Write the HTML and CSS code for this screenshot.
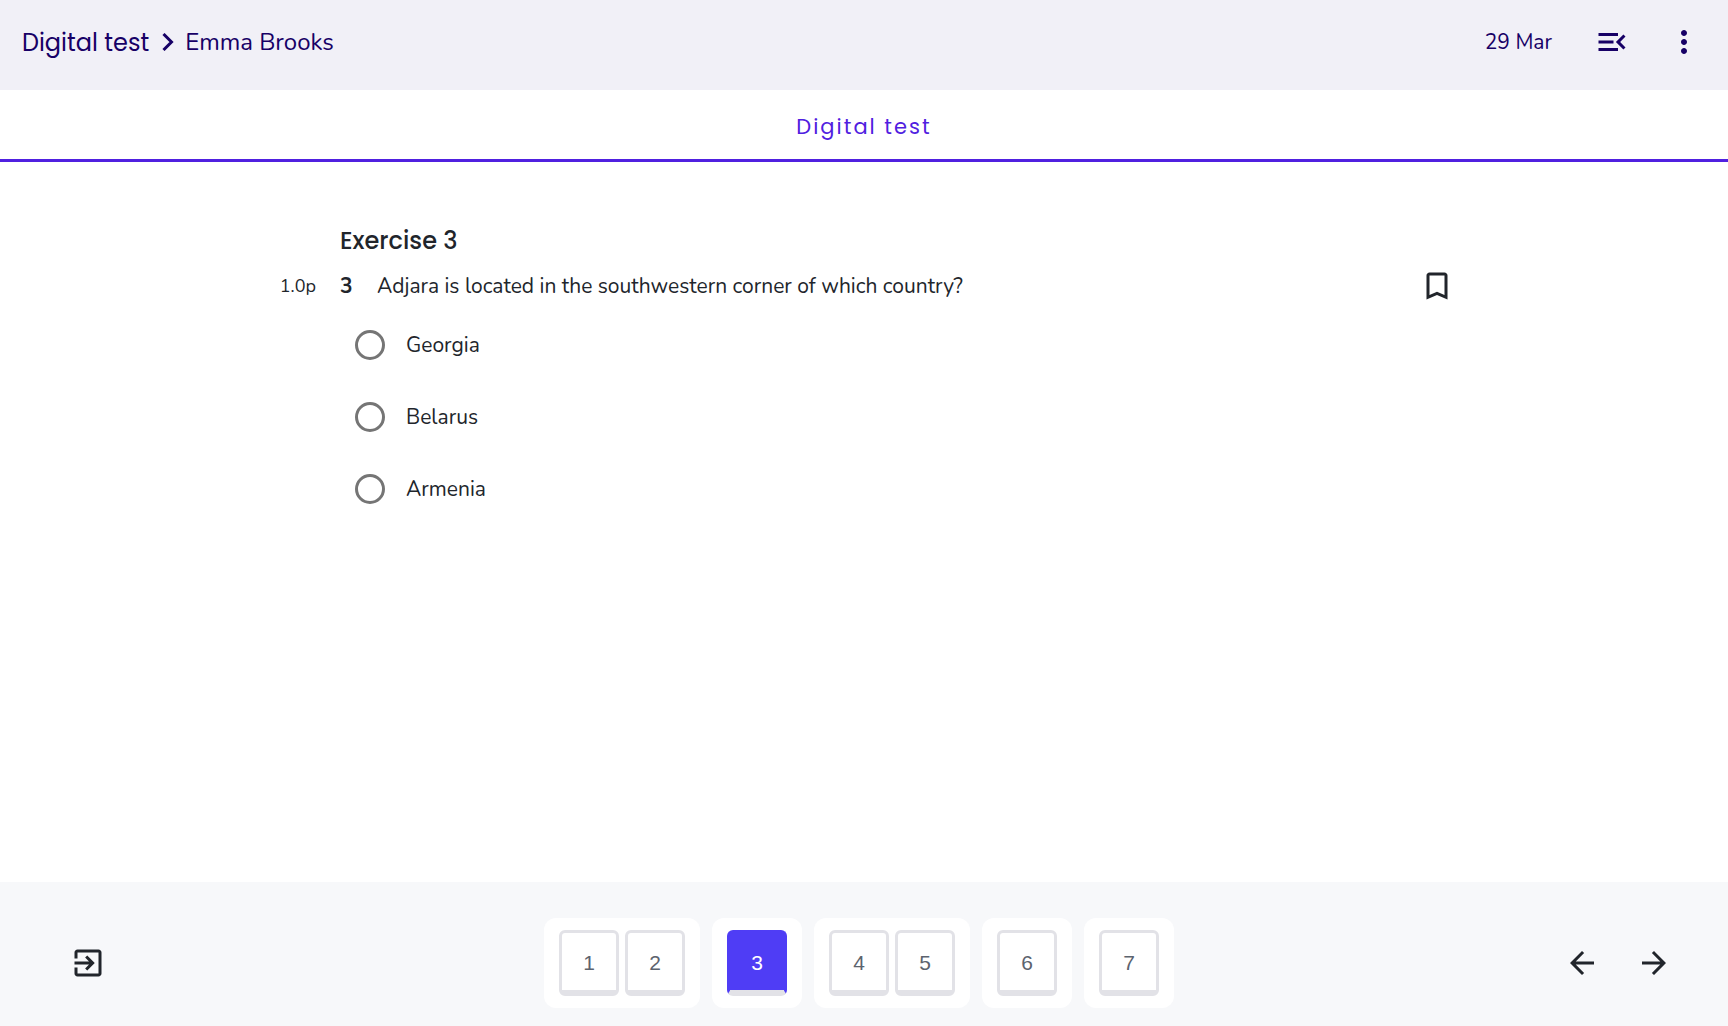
FILE: index.html
```html
<!DOCTYPE html>
<html lang="en">
<head>
  <meta charset="UTF-8">
  <meta name="viewport" content="width=device-width, initial-scale=1.0">
  <title>Digital test</title>
  <link rel="stylesheet" href="styles.css">
</head>
<body>
  <header class="topbar">
    <nav class="breadcrumb" aria-label="Breadcrumb">
      <a href="#" class="crumb-title">Digital test</a>
      <svg class="chevron" viewBox="0 0 12 18" aria-hidden="true"><path d="M1.500 1L9.500 9l-8 8"/></svg>
      <span class="crumb-name">Emma Brooks</span>
    </nav>
    <div class="topbar-right">
      <span class="date">29 Mar</span>
      <button type="button" class="icon-btn" aria-label="Open panel">
        <svg class="icon" viewBox="0 0 24 24"><path d="M3 18h13v-2H3v2zm0-5h10v-2H3v2zm0-7v2h13V6H3zm18 9.590L17.420 12 21 8.410 19.590 7l-5 5 5 5L21 15.590z"/></svg>
      </button>
      <button type="button" class="icon-btn" aria-label="More options">
        <svg class="icon" viewBox="0 0 24 24"><path d="M12 8c1.100 0 2-.9 2-2s-.9-2-2-2-2 .9-2 2 .9 2 2 2zm0 2c-1.100 0-2 .9-2 2s.9 2 2 2 2-.9 2-2-.9-2-2-2zm0 6c-1.100 0-2 .9-2 2s.9 2 2 2 2-.9 2-2-.9-2-2-2z"/></svg>
      </button>
    </div>
  </header>

  <nav class="tabs">
    <a href="#" class="tab">Digital test</a>
  </nav>

  <main class="content">
    <form class="exercise">
      <h1>Exercise 3</h1>
      <div class="question-row">
        <span class="points">1.0p</span>
        <span class="number">3</span>
        <p class="question" id="question-text">Adjara is located in the southwestern corner of which country?</p>
        <button type="button" class="bookmark" aria-label="Bookmark question">
          <svg class="icon" viewBox="0 0 24 24"><path d="M17 3H7c-1.100 0-2 .9-2 2v16l7-3 7 3V5c0-1.100-.9-2-2-2zm0 15l-5-2.180L7 18V5h10v13z"/></svg>
        </button>
      </div>
      <div class="options" role="radiogroup" aria-labelledby="question-text">
        <div class="option">
          <input type="radio" name="answer" id="answer-1" value="Georgia">
          <label for="answer-1">Georgia</label>
        </div>
        <div class="option">
          <input type="radio" name="answer" id="answer-2" value="Belarus">
          <label for="answer-2">Belarus</label>
        </div>
        <div class="option">
          <input type="radio" name="answer" id="answer-3" value="Armenia">
          <label for="answer-3">Armenia</label>
        </div>
      </div>
    </form>
  </main>

  <footer class="bottombar">
    <div class="exit">
      <button type="button" class="icon-btn" aria-label="Exit test">
        <svg class="icon" viewBox="0 0 24 24"><path d="M10.090 15.590L11.500 17l5-5-5-5-1.410 1.410L12.670 11H3v2h9.670l-2.580 2.590zM19 3H5c-1.110 0-2 .9-2 2v4h2V5h14v14H5v-4H3v4c0 1.100.89 2 2 2h14c1.100 0 2-.9 2-2V5c0-1.100-.9-2-2-2z"/></svg>
      </button>
    </div>
    <nav class="pager" aria-label="Questions">
      <div class="page-group">
        <button type="button" class="page">1</button>
        <button type="button" class="page">2</button>
      </div>
      <div class="page-group">
        <button type="button" class="page active">3</button>
      </div>
      <div class="page-group">
        <button type="button" class="page">4</button>
        <button type="button" class="page">5</button>
      </div>
      <div class="page-group">
        <button type="button" class="page">6</button>
      </div>
      <div class="page-group">
        <button type="button" class="page">7</button>
      </div>
    </nav>
    <div class="arrows">
      <button type="button" class="icon-btn" aria-label="Previous question">
        <svg class="icon" viewBox="0 0 24 24"><path d="M20 11H7.830l5.590-5.590L12 4l-8 8 8 8 1.410-1.410L7.830 13H20v-2z"/></svg>
      </button>
      <button type="button" class="icon-btn" aria-label="Next question">
        <svg class="icon" viewBox="0 0 24 24"><path d="M12 4l-1.410 1.410L16.170 11H4v2h12.170l-5.580 5.590L12 20l8-8z"/></svg>
      </button>
    </div>
  </footer>
</body>
</html>
```
FILE: styles.css
```css
* {
  box-sizing: border-box;
}

body {
  margin: 0;
  min-height: 100vh;
  display: flex;
  flex-direction: column;
  background: #fff;
  color: #21252b;
  font-family: Nunito, Lato, sans-serif;
  font-size: 21px;
  line-height: 30px;
}

a {
  color: inherit;
  text-decoration: none;
}

button {
  margin: 0;
  padding: 0;
  border: none;
  background: none;
  color: inherit;
  cursor: pointer;
}

.icon {
  display: block;
  width: 36px;
  height: 36px;
  fill: currentColor;
}

.icon-btn {
  display: flex;
  align-items: center;
  justify-content: center;
  width: 72px;
  height: 72px;
}

/* top bar */
.topbar {
  display: flex;
  justify-content: space-between;
  align-items: center;
  height: 90px;
  padding: 0 8px 6px 22px;
  background: #f1f0f7;
  color: #170066;
}

.breadcrumb {
  display: flex;
  align-items: center;
  font-size: 24px;
}

.crumb-title {
  padding-top: 2px;
  font-family: Poppins, Inter, sans-serif;
}

.chevron {
  width: 12px;
  height: 18px;
  margin: 0 11px 0 13px;
  fill: none;
  stroke: currentColor;
  stroke-width: 3;
}

.topbar-right {
  display: flex;
  align-items: center;
}

.date {
  margin-right: 24px;
}

/* tabs */
.tabs {
  display: flex;
  height: 72px;
  border-bottom: 3px solid #5020e0;
}

.tab {
  flex: 1;
  padding-top: 22px;
  text-align: center;
  font-family: Poppins, Inter, sans-serif;
  letter-spacing: 2px;
  color: #5020e0;
}

/* exercise */
.content {
  flex: 1;
  padding: 63px 24px 48px;
}

.exercise {
  max-width: 1182px;
  margin: 0 auto;
}

h1 {
  margin: 0 0 11px 67px;
  font-family: Poppins, Inter, sans-serif;
  font-size: 24px;
  font-weight: 500;
  line-height: 32px;
}

.question-row {
  display: grid;
  grid-template-columns: 67px 37px 1fr 36px;
  align-items: center;
}

.points {
  padding-right: 24px;
  font-size: 18px;
  text-align: right;
}

.number {
  font-weight: 700;
}

.question {
  margin: 0;
}

.options {
  display: flex;
  flex-direction: column;
  margin: 5px 0 0 82px;
}

.option {
  display: flex;
  align-items: center;
  gap: 21px;
  height: 72px;
}

.option input {
  appearance: none;
  width: 30px;
  height: 30px;
  margin: 0;
  border: 3px solid #757575;
  border-radius: 50%;
}

.option input:checked {
  border-color: #4f3df5;
  background: radial-gradient(#4f3df5 50%, #fff 55%);
}

/* bottom bar */
.bottombar {
  display: grid;
  grid-template-columns: 1fr auto 1fr;
  align-items: center;
  padding: 36px 38px 18px 28px;
  background: #f7f8fa;
}

.exit {
  padding-left: 24px;
}

.pager {
  display: flex;
  gap: 12px;
}

.page-group {
  display: flex;
  gap: 6px;
  padding: 12px 15px;
  border-radius: 12px;
  background: #fff;
}

.page {
  width: 60px;
  height: 66px;
  padding-top: 3px;
  border: 3px solid #e2e2e7;
  border-bottom-width: 6px;
  border-radius: 6px;
  color: #5c636e;
  font-family: "Liberation Sans", sans-serif;
  font-size: 21px;
}

.page.active {
  border-color: #4f3df5;
  border-bottom-color: #e2e2e7;
  background: #4f3df5;
  color: #fff;
}

.arrows {
  display: flex;
  justify-content: flex-end;
}
```
